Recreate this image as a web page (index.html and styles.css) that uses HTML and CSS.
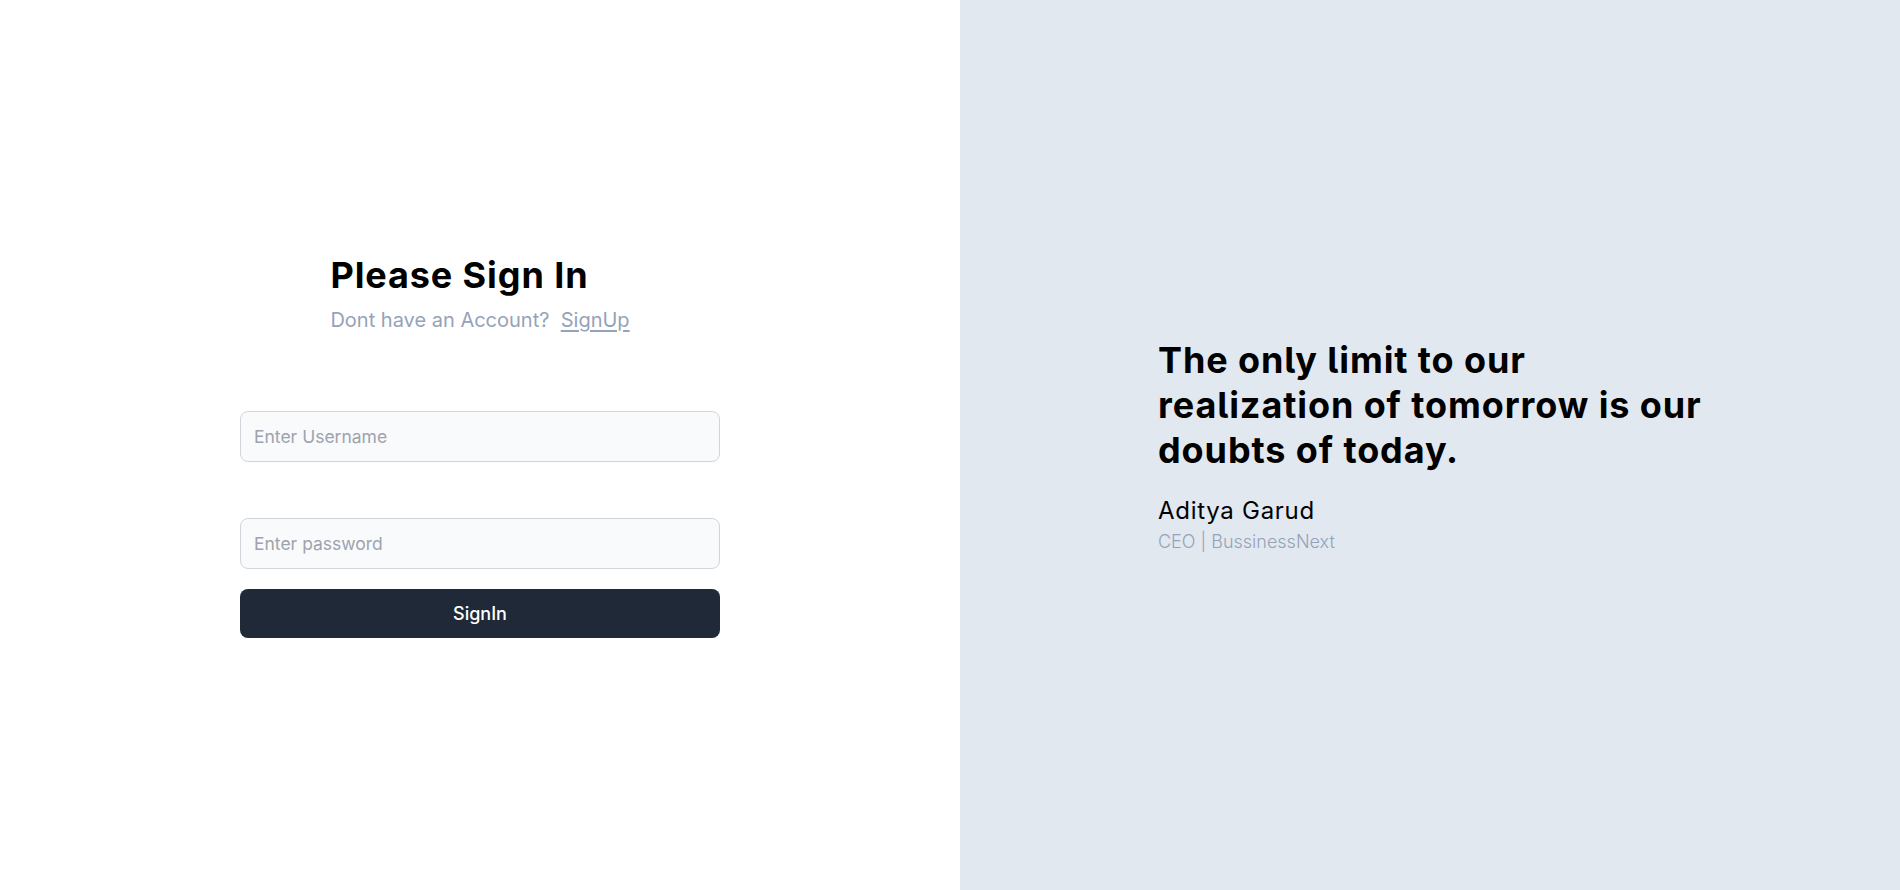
FILE: index.html
```html
<!DOCTYPE html>
<html lang="en">
<head>
<meta charset="utf-8">
<title>Sign In</title>
<link rel="stylesheet" href="styles.css">
</head>
<body>
<main class="page">
  <section class="auth">
    <div class="auth-inner">
      <header class="auth-head">
        <h1 class="title">Please Sign In</h1>
        <p class="subtitle">Dont have an Account?&nbsp; <a href="#" class="link">SignUp</a></p>
      </header>
      <form class="form">
        <input class="field field-user" type="text" placeholder="Enter Username">
        <input class="field field-pass" type="password" placeholder="Enter password">
        <button class="btn" type="button">SignIn</button>
      </form>
    </div>
  </section>
  <aside class="quote-panel">
    <div class="quote-box">
      <blockquote class="quote">The only limit to our realization of tomorrow is our doubts of today.</blockquote>
      <p class="author">Aditya Garud</p>
      <p class="role">CEO | BussinessNext</p>
    </div>
  </aside>
</main>
</body>
</html>
```
FILE: styles.css
```css
* { box-sizing: border-box; }
html, body { margin: 0; padding: 0; }
body {
  font-family: Inter, "Noto Sans", sans-serif;
  background: #ffffff;
  color: #000;
}
.page {
  display: grid;
  grid-template-columns: 960px 1fr;
  height: 890px;
}
.auth {
  display: flex;
  align-items: center;
  justify-content: center;
}
.auth-inner {
  width: 480px;
  display: flex;
  flex-direction: column;
  align-items: center;
}
.auth-head {
  display: flex;
  flex-direction: column;
}
.title {
  margin: 0;
  padding-top: 3px;
  font-size: 36px;
  line-height: 40px;
  font-weight: 700;
  letter-spacing: 0.025em;
}
.subtitle {
  margin: 11px 0 0;
  font-size: 20px;
  line-height: 28px;
  color: #94a3b8;
}
.link {
  color: #94a3b8;
  text-decoration: underline;
  text-underline-offset: 3px;
}
.form {
  width: 480px;
  margin-top: 77px;
  display: flex;
  flex-direction: column;
}
.field {
  height: 51px;
  width: 100%;
  border: 1px solid #d1d5db;
  border-radius: 8px;
  background: #f9fafb;
  padding: 0 13px;
  font-family: Inter, "Noto Sans", sans-serif;
  font-size: 17.5px;
  color: #111827;
  outline: none;
}
.field::placeholder { color: #9ca3af; }
.field-pass { margin-top: 56px; }
.btn {
  margin-top: 20px;
  height: 49px;
  width: 100%;
  border: 0;
  border-radius: 8px;
  background: #1f2937;
  color: #fff;
  font-family: Inter, "Noto Sans", sans-serif;
  font-size: 18px;
  font-weight: 500;
}
.quote-panel {
  background: #e2e8f0;
  display: flex;
  align-items: center;
  justify-content: center;
}
.quote-box {
  width: 544px;
  padding-top: 3px;
}
.quote {
  margin: 0;
  font-size: 36px;
  line-height: 45px;
  font-weight: 700;
  letter-spacing: 0.025em;
  font-feature-settings: "cv05" 1;
}
.author {
  margin: 22px 0 0;
  font-size: 24px;
  line-height: 32px;
  letter-spacing: 0.03em;
}
.role {
  margin: 1px 0 0;
  font-size: 18px;
  line-height: 28px;
  font-weight: 300;
  color: #94a3b8;
}
```
